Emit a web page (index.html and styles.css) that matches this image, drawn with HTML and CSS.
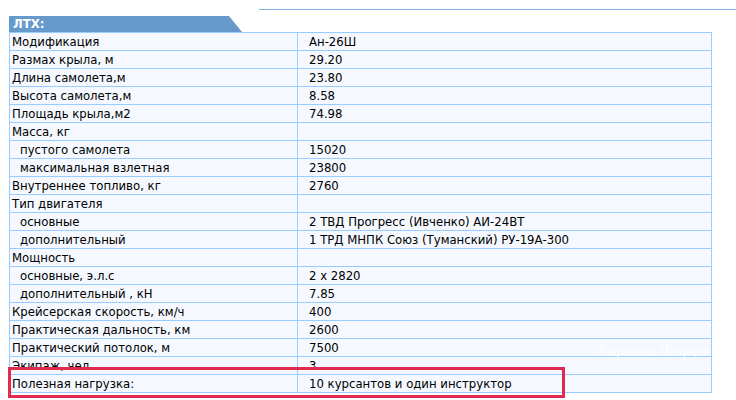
FILE: index.html
```html
<!DOCTYPE html>
<html>
<head>
<meta charset="utf-8">
<link rel="stylesheet" href="styles.css">
</head>
<body>
<div class="page">
  <div class="topline"></div>
  <div class="head">ЛТХ:</div>
  <table class="ttx">
    <colgroup><col class="c1"><col class="c2"></colgroup>
    <tr><td>Модификация</td><td>Ан-26Ш</td></tr>
    <tr><td>Размах крыла, м</td><td>29.20</td></tr>
    <tr><td>Длина самолета,м</td><td>23.80</td></tr>
    <tr><td>Высота самолета,м</td><td>8.58</td></tr>
    <tr><td>Площадь крыла,м2</td><td>74.98</td></tr>
    <tr><td>Масса, кг</td><td></td></tr>
    <tr><td class="sub">пустого самолета</td><td>15020</td></tr>
    <tr><td class="sub">максимальная взлетная</td><td>23800</td></tr>
    <tr><td>Внутреннее топливо, кг</td><td>2760</td></tr>
    <tr><td>Тип двигателя</td><td></td></tr>
    <tr><td class="sub">основные</td><td>2 ТВД Прогресс (Ивченко) АИ-24ВТ</td></tr>
    <tr><td class="sub">дополнительный</td><td>1 ТРД МНПК Союз (Туманский) РУ-19А-300</td></tr>
    <tr><td>Мощность</td><td></td></tr>
    <tr><td class="sub">основные, э.л.с</td><td>2 x 2820</td></tr>
    <tr><td class="sub">дополнительный , кН</td><td>7.85</td></tr>
    <tr><td>Крейсерская скорость, км/ч</td><td>400</td></tr>
    <tr><td>Практическая дальность, км</td><td>2600</td></tr>
    <tr><td>Практический потолок, м</td><td>7500</td></tr>
    <tr><td>Экипаж, чел.</td><td>3</td></tr>
    <tr><td>Полезная нагрузка:</td><td>10 курсантов и один инструктор</td></tr>
  </table>
  <div class="mark">Харьков Форум</div>
  <div class="highlight"></div>
</div>
</body>
</html>
```
FILE: styles.css
```css
html, body {
  margin: 0;
  padding: 0;
  background: #ffffff;
}
.page {
  position: relative;
  width: 736px;
  height: 400px;
  overflow: hidden;
  padding-top: 9px;
  box-sizing: border-box;
  font-family: "DejaVu Sans Condensed", "DejaVu Sans", Verdana, sans-serif;
}
.topline {
  margin-left: 259px;
  height: 1px;
  background: #80b3e6;
}
.head {
  margin-top: 6px;
  margin-left: 9px;
  width: 233px;
  height: 16px;
  background: #6699cc;
  clip-path: polygon(0 0, 220px 0, 100% 100%, 0 100%);
  color: #ffffff;
  font-weight: bold;
  font-size: 13px;
  line-height: 16px;
  padding-left: 4px;
  box-sizing: border-box;
}
.ttx {
  margin-left: 9px;
  width: 703px;
  table-layout: fixed;
  border-collapse: collapse;
  background: #f5f9ff;
  font-size: 13px;
  color: #000000;
}
.c1 {
  width: 288px;
}
.ttx td {
  border: 1px solid #99ccff;
  height: 17px;
  padding: 0 0 0 2px;
  line-height: 17px;
  white-space: nowrap;
  overflow: hidden;
}
.ttx td:last-child {
  padding-left: 11px;
}
.ttx td.sub {
  padding-left: 10px;
}
.mark {
  position: absolute;
  left: 596px;
  top: 341px;
  font-family: "Liberation Serif", serif;
  font-size: 17px;
  color: rgba(255, 255, 255, 0.85);
}
.highlight {
  position: absolute;
  left: 8px;
  top: 367px;
  width: 557px;
  height: 31px;
  border: 3px solid #e02a4e;
  box-sizing: border-box;
}
```
